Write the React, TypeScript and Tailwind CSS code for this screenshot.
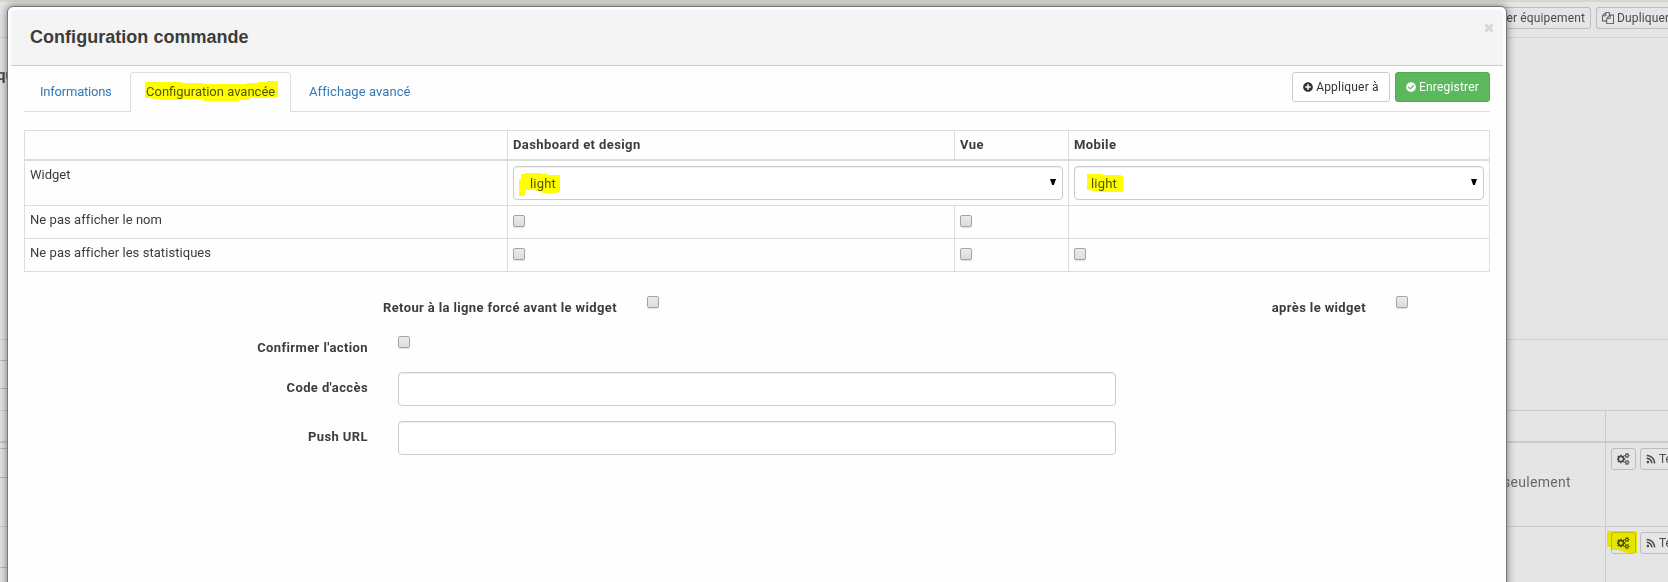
import React from 'react';
import { FaPlusCircle, FaCheckCircle, FaRss } from 'react-icons/fa';

const COGS =
  'M832 896q0-106-75-181t-181-75-181 75-75 181 75 181 181 75 181-75 75-181zm768 512q0-52-38-90t-90-38-90 38-38 90q0 53 37.5 90.5t90.5 37.5 90.5-37.5 37.5-90.5zm0-1024q0-52-38-90t-90-38-90 38-38 90q0 53 37.5 90.5t90.5 37.5 90.5-37.5 37.5-90.5zm-384 421v185q0 10-7 19.5t-16 10.5l-155 24q-11 35-32 76 34 48 90 115 7 11 7 20 0 12-7 19-23 30-82.5 89.5t-78.5 59.5q-11 0-21-7l-115-90q-37 19-77 31-11 108-23 155-7 24-30 24h-186q-11 0-20-7.5t-10-17.5l-23-153q-34-10-75-31l-118 89q-7 7-20 7-11 0-21-8-144-133-144-160 0-9 7-19 10-14 41-53t47-61q-23-44-35-82l-152-24q-10-1-17-9.5t-7-19.5v-185q0-10 7-19.5t16-10.5l155-24q11-35 32-76-34-48-90-115-7-11-7-20 0-12 7-20 22-30 82-89t79-59q11 0 21 7l115 90q34-18 77-32 11-108 23-154 7-24 30-24h186q11 0 20 7.5t10 17.5l23 153q34 10 75 31l118-89q8-7 20-7 11 0 21 8 144 133 144 160 0 8-7 19-12 16-42 54t-45 60q23 48 34 82l152 23q10 2 17 10.5t7 19.5zm640 533v140q0 16-149 31-12 27-30 52 51 113 51 138 0 4-4 7-122 71-124 71-8 0-46-47t-52-68q-20 2-30 2t-30-2q-14 21-52 68t-46 47q-2 0-124-71-4-3-4-7 0-25 51-138-18-25-30-52-149-15-149-31v-140q0-16 149-31 13-29 30-52-51-113-51-138 0-4 4-7 4-2 35-20t59-34 30-16q8 0 46 46.5t52 67.5q20-2 30-2t30 2q51-71 92-112l6-2q4 0 124 70 4 3 4 7 0 25-51 138 17 23 30 52 149 15 149 31zm0-1024v140q0 16-149 31-12 27-30 52 51 113 51 138 0 4-4 7-122 71-124 71-8 0-46-47t-52-68q-20 2-30 2t-30-2q-14 21-52 68t-46 47q-2 0-124-71-4-3-4-7 0-25 51-138-18-25-30-52-149-15-149-31v-140q0-16 149-31 13-29 30-52-51-113-51-138 0-4 4-7 4-2 35-20t59-34 30-16q8 0 46 46.5t52 67.5q20-2 30-2t30 2q51-71 92-112l6-2q4 0 124 70 4 3 4 7 0 25-51 138 17 23 30 52 149 15 149 31z';
const FILES =
  'M1696 384q40 0 68 28t28 68v1216q0 40-28 68t-68 28h-960q-40 0-68-28t-28-68v-288h-544q-40 0-68-28t-28-68v-672q0-40 20-88t48-76l408-408q28-28 76-48t88-20h416q40 0 68 28t28 68v328q68-40 128-40h416zm-544 213l-299 299h299v-299zm-640-384l-299 299h299v-299zm196 647l316-316v-416h-384v416q0 40-28 68t-68 28h-416v640h512v-256q0-40 20-88t48-76zm956 804v-1152h-384v416q0 40-28 68t-68 28h-416v640h896z';

function Highlight({ d, className }: { d: string; className: string }) {
  return (
    <svg className={`absolute pointer-events-none overflow-visible mix-blend-multiply ${className}`} aria-hidden>
      <path d={d} fill="#ffff00" />
    </svg>
  );
}

function Check() {
  return (
    <span
      role="checkbox"
      aria-checked="false"
      className="block h-3 w-3 shrink-0 rounded-[2px] border border-[#a4a4a4] bg-linear-to-b from-[#ebebeb] to-[#dcdcdc] shadow-[0_1px_1px_rgba(0,0,0,0.12)]"
    />
  );
}

function Select({ children }: { children: React.ReactNode }) {
  return (
    <div className="flex h-[34px] items-center justify-between rounded-[4px] border border-[#ccc] bg-white pl-4 pr-[6px] shadow-[inset_0_1px_1px_rgba(0,0,0,0.075)]">
      <span className="relative top-px leading-5 tracking-[0.2px] text-[#555]">{children}</span>
      <svg width="6" height="6" viewBox="0 0 6 6" className="mb-px">
        <path d="M0 0H6L3.8 6H2.2z" fill="#000" />
      </svg>
    </div>
  );
}

function Field({ label }: { label: string }) {
  return (
    <div className="mb-[15px] flex h-[34px]">
      <label className="w-[357px] pt-[7px] text-right font-bold leading-[18px] tracking-[0.4px]">{label}</label>
      <input className="ml-[30px] h-[34px] w-[718px] rounded-[4px] border border-[#ccc] bg-white shadow-[inset_0_1px_1px_rgba(0,0,0,0.075)]" />
    </div>
  );
}

function CommandActions({ marked }: { marked?: boolean }) {
  return (
    <div className="relative flex w-[63px] shrink-0 gap-1 overflow-hidden border-l border-[#cbcbcb] pl-[5px] pt-[5px] text-xs text-[#4a4a4a]">
      <span className="flex h-[22px] w-[25px] shrink-0 items-center justify-center rounded-[3px] border border-[#bdbdbd]">
        <svg width="13" height="12" viewBox="0 0 1920 1792" fill="currentColor">
          <path d={COGS} />
        </svg>
      </span>
      <span className="flex h-[22px] w-[60px] shrink-0 items-center gap-[3px] rounded-[3px] border border-[#bdbdbd] pl-[5px]">
        <FaRss size={10} />
        Tester
      </span>
      {marked && <Highlight className="left-px top-1 h-6 w-8" d="M0 0H30V22H20L17 21L14 20L11 19H4V16H0Z" />}
    </div>
  );
}

function PageBehind() {
  return (
    <div className="flex h-full flex-col bg-[#e5e5e5] text-[#4a4a4a]">
      <div className="h-0.5 shrink-0 bg-[#ccdcc8]" />
      <div className="flex h-9 shrink-0 justify-end overflow-hidden border-b border-[#d2d2d2] pt-[5px] text-xs tracking-[0.15px]">
        <span className="flex h-[22px] w-[140px] shrink-0 items-center justify-end rounded-[3px] border border-[#bdbdbd] pr-[5px]">
          Configurer équipement
        </span>
        <span className="ml-[5px] flex h-[22px] w-[72px] shrink-0 items-center gap-[3px] overflow-hidden rounded-l-[3px] border border-r-0 border-[#bdbdbd] pl-[5px]">
          <svg width="12" height="12" viewBox="0 0 1792 1792" fill="currentColor" className="shrink-0">
            <path d={FILES} />
          </svg>
          Dupliquer
        </span>
      </div>
      <div className="flex min-h-0 flex-1">
        <div className="flex w-[14px] flex-col overflow-hidden">
          <span className="-ml-[3px] h-[301px] shrink-0 pt-[27px] text-[15px] font-bold leading-5">qu</span>
          <span className="h-[21px] shrink-0 border-t border-[#cfcfcf]" />
          <span className="h-[29px] shrink-0 border-y border-[#b8b8b8]" />
          <span className="h-[21px] shrink-0" />
          <span className="h-[31px] shrink-0 border-t border-[#cbcbcb]" />
          <span className="h-[7px] shrink-0 border-t-2 border-[#cbcbcb]" />
          <span className="h-[30px] shrink-0 border-y border-[#b8b8b8]" />
          <span className="h-[48px] shrink-0" />
          <span className="h-[42px] shrink-0 border-y border-t-[#cbcbcb] border-b-[#b8b8b8]" />
        </div>
        <div className="ml-auto flex w-[164px] flex-col">
          <div className="h-[301px] shrink-0" />
          <div className="h-[71px] shrink-0 border-t border-[#cfcfcf]" />
          <div className="flex h-[31px] shrink-0 justify-end border-t border-[#cbcbcb]">
            <span className="w-[63px] border-l border-[#cbcbcb]" />
          </div>
          <div className="flex h-[85px] shrink-0 border-t-2 border-[#cbcbcb]">
            <span className="flex-1 pt-[29px] text-sm leading-5 tracking-[0.3px] text-[#686868]">
              <span className="-ml-px">seulement</span>
            </span>
            <CommandActions />
          </div>
          <div className="flex h-14 shrink-0 justify-end border-t border-[#cbcbcb]">
            <CommandActions marked />
          </div>
        </div>
      </div>
    </div>
  );
}

const cell = 'border border-[#ddd] px-[5px] align-top';
const head = `${cell} border-b-2 pt-[5px] tracking-[0.4px]`;

export default function App() {
  return (
    <div className="relative h-[582px] w-[1668px] overflow-hidden bg-[#e5e5e5] font-['Roboto','Liberation_Sans',sans-serif] text-[13px] text-[#3c3c3c]">
      <PageBehind />
      <section className="absolute left-[7px] top-1.5 h-[620px] w-[1500px] rounded-[6px] border border-[#777] bg-[#fefefe] p-[3px] shadow-[0_0_9px_rgba(0,0,0,0.5)]">
        <header className="flex h-14 justify-between rounded-t-[4px] border-b border-[#ccc] bg-[#f4f4f4] pl-[19px] pr-[9px]">
          <h2 className="pt-[15px] font-['Liberation_Sans',sans-serif] text-[18px] font-bold leading-6 tracking-[0.03px]">
            Configuration commande
          </h2>
          <svg width="10" height="10" viewBox="0 0 10 10" className="mt-[13px]">
            <path d="M1.5 1.5L8.5 8.5M8.5 1.5L1.5 8.5" stroke="#d8d8d8" strokeWidth="3" />
          </svg>
        </header>
        <div className="ml-[13px] mr-[13px] pt-1.5">
          <nav className="flex h-10 items-stretch border-b border-[#ddd] leading-[18px] text-[#337ab7]">
            <a className="w-[106px] pl-4 pt-[11px] tracking-[-0.22px]">Informations</a>
            <a className="-mb-px w-[161px] rounded-t-[4px] border border-b-0 border-[#ddd] bg-[#fefefe] pl-[15px] pt-[10px] text-[#555]">
              <span className="relative">
                Configuration avancée
                <Highlight
                  className="-left-px -top-1 h-5 w-[133px]"
                  d="M0 2H37V3H58V4H102V3H113V2H122V1H133V17H124V18H105V20H94V21H59V19H37V20H15V19H7V18H0Z"
                />
              </span>
            </a>
            <a className="pl-[18px] pt-[11px] tracking-[0.08px]">Affichage avancé</a>
            <div className="ml-auto flex gap-[5px] text-xs tracking-[0.2px]">
              <button className="flex h-[30px] w-[98px] items-center justify-center gap-[3px] rounded-[3px] border border-[#ccc] bg-white text-[#333]">
                <FaPlusCircle size={10} />
                Appliquer à
              </button>
              <button className="flex h-[30px] w-[95px] items-center justify-center gap-[3px] rounded-[3px] border border-[#4cae4c] bg-[#5cb85c] text-white">
                <FaCheckCircle size={10} />
                Enregistrer
              </button>
            </div>
          </nav>
          <table className="mt-[18px] w-[1466px] table-fixed border-collapse">
            <colgroup>
              <col className="w-[483px]" />
              <col className="w-[447px]" />
              <col className="w-[114px]" />
              <col className="w-[421px]" />
            </colgroup>
            <thead>
              <tr className="h-[29px] text-left leading-[18px]">
                <th className={head} />
                <th className={head}>Dashboard et design</th>
                <th className={head}>Vue</th>
                <th className={head}>Mobile</th>
              </tr>
            </thead>
            <tbody className="leading-[18px]">
              <tr className="h-[46px]">
                <td className={`${cell} pt-[5px]`}>Widget</td>
                <td className={`${cell} pt-[5px]`} colSpan={2}>
                  <Select>
                    light
                    <Highlight
                      className="-left-[11px] -top-px h-6 w-[41px]"
                      d="M2 1H6V0H23V1H28V2H41V19H39V20H23V18H17V17H6V23H0V6H2Z"
                    />
                  </Select>
                </td>
                <td className={`${cell} pt-[5px]`}>
                  <Select>
                    light
                    <Highlight className="-left-1 top-0 h-5 w-9" d="M0 0H16V1H34V2H36V18H12V17H4V16H0Z" />
                  </Select>
                </td>
              </tr>
              <tr className="h-[33px]">
                <td className={`${cell} pt-[5px] tracking-[0.06px]`}>Ne pas afficher le nom</td>
                <td className={`${cell} pt-[9px]`}><Check /></td>
                <td className={`${cell} pt-[9px]`}><Check /></td>
                <td className={cell} />
              </tr>
              <tr className="h-[33px]">
                <td className={`${cell} pt-[5px] tracking-[0.06px]`}>Ne pas afficher les statistiques</td>
                <td className={`${cell} pt-[9px]`}><Check /></td>
                <td className={`${cell} pt-[9px]`}><Check /></td>
                <td className={`${cell} pt-[9px]`}><Check /></td>
              </tr>
            </tbody>
          </table>
          <form className="-ml-[13px] pt-[24px]">
            <div className="flex h-10 font-bold leading-[18px] tracking-[0.37px]">
              <label className="w-[606px] pt-[3px] text-right">Retour à la ligne forcé avant le widget</label>
              <span className="ml-[30px]"><Check /></span>
              <label className="ml-[606px] w-[101px] whitespace-nowrap pt-[3px] text-right">après le widget</label>
              <span className="ml-[30px]"><Check /></span>
            </div>
            <div className="flex h-9 font-bold leading-[18px] tracking-[0.4px]">
              <label className="w-[357px] pt-[3px] text-right">Confirmer l'action</label>
              <span className="ml-[30px]"><Check /></span>
            </div>
            <Field label="Code d'accès" />
            <Field label="Push URL" />
          </form>
        </div>
      </section>
    </div>
  );
}
